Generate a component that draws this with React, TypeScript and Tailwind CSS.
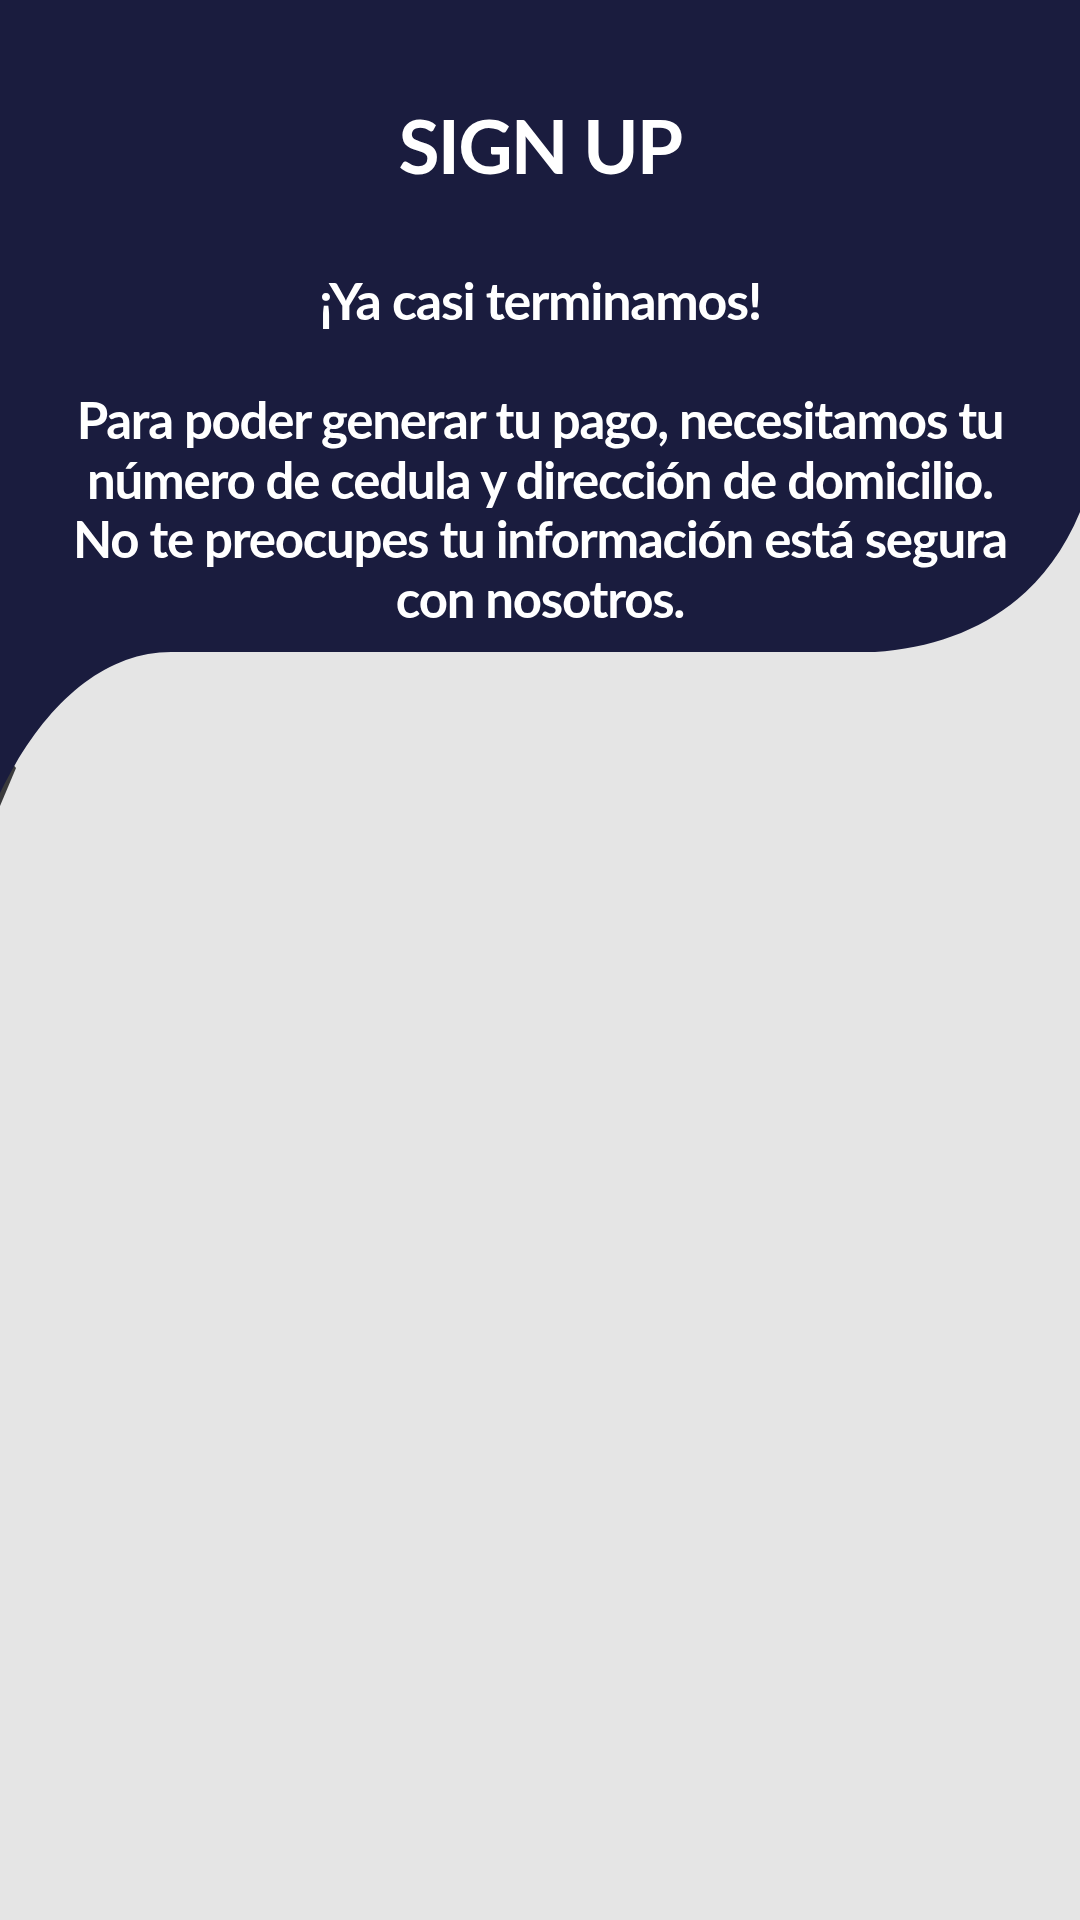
import React from 'react';

function HeaderShape() {
  return (
    <svg
      className="absolute inset-x-0 top-0 w-full h-[820px] -z-0"
      viewBox="0 0 1080 820"
      preserveAspectRatio="none"
      aria-hidden="true"
    >
      {/* thin dark edge peeking out at the bottom left */}
      <path d="M0 748 L16 768 L0 806 Z" fill="#3a3a3c" />
      <path
        d="M0 0 H1080 V512 C1042 604 965 646 875 652 H171 C100 652 40 710 0 793 Z"
        fill="#1a1c3e"
      />
    </svg>
  );
}

export default function App() {
  return (
    <div className="min-h-[1920px] w-full bg-[#e5e5e5] relative overflow-hidden" style={{ fontFamily: 'Lato, "Open Sans", sans-serif' }}>
      <HeaderShape />

      {/* Header copy */}
      <section className="relative z-10 flex flex-col items-center text-center text-white pt-[108px] px-4">
        <h1 className="text-[75px] font-bold leading-none tracking-tight">SIGN UP</h1>
        <h2 className="mt-[85px] text-[52px] font-bold leading-tight tracking-tight">¡Ya casi terminamos!</h2>
        <p className="mt-[57px] text-[51px] font-bold leading-[59.5px] tracking-tight whitespace-nowrap">
          Para poder generar tu pago, necesitamos tu
          <br />
          número de cedula y dirección de domicilio.
          <br />
          No te preocupes tu información está segura
          <br />
          con nosotros.
        </p>
      </section>
    </div>
  );
}
